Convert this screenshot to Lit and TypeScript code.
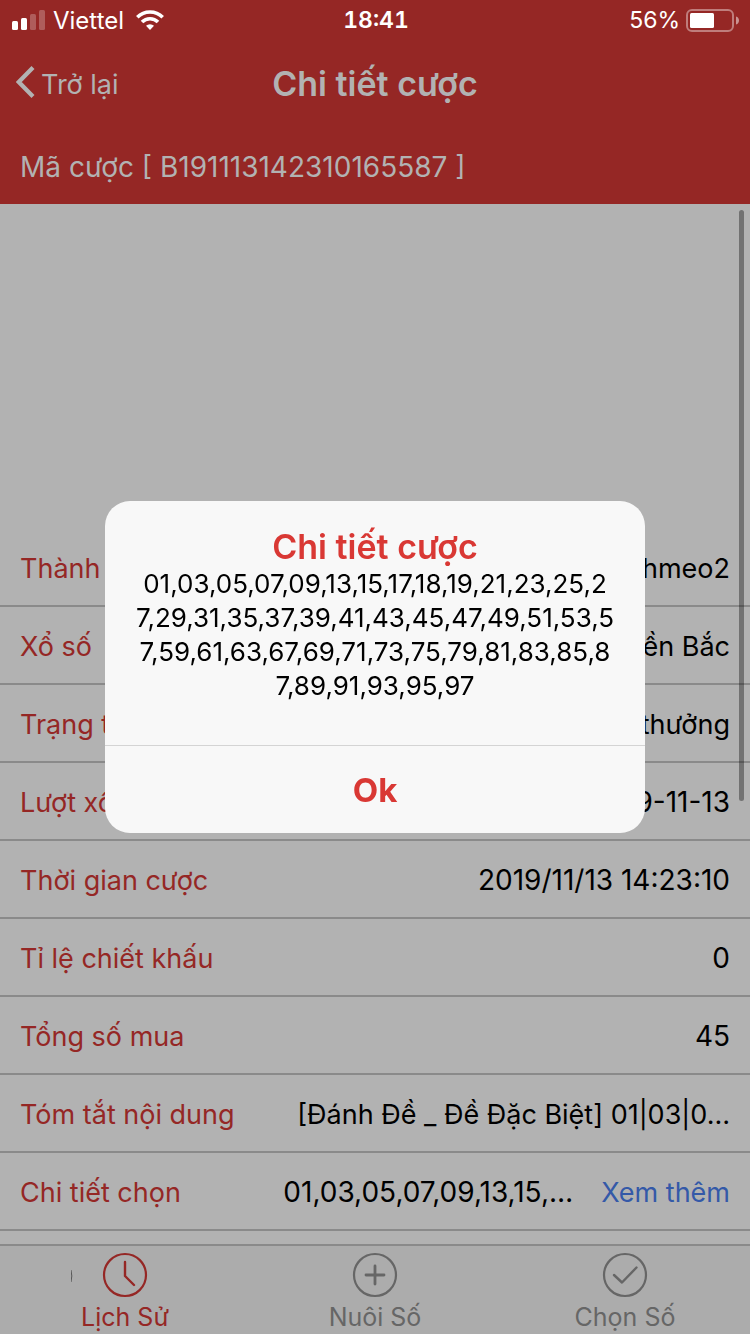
import { LitElement, html, css, svg } from "lit";
import { customElement, state } from "lit/decorators.js";

interface Row {
  label: string;
  value: string;
  numeric?: boolean;
  more?: boolean;
}

const ROWS: Row[] = [
  { label: "Thành viên", value: "thanhmeo2" },
  { label: "Xổ số", value: "Miền Bắc" },
  { label: "Trạng thái", value: "Trúng thưởng" },
  { label: "Lượt xổ", value: "2019-11-13", numeric: true },
  { label: "Thời gian cược", value: "2019/11/13 14:23:10", numeric: true },
  { label: "Tỉ lệ chiết khấu", value: "0", numeric: true },
  { label: "Tổng số mua", value: "45", numeric: true },
  { label: "Tóm tắt nội dung", value: "[Đánh Đề _ Đề Đặc Biệt] 01|03|0…" },
  { label: "Chi tiết chọn", value: "01,03,05,07,09,13,15,…", numeric: true, more: true },
];

const NUMBERS = [
  "01,03,05,07,09,13,15,17,18,19,21,23,25,2",
  "7,29,31,35,37,39,41,43,45,47,49,51,53,5",
  "7,59,61,63,67,69,71,73,75,79,81,83,85,8",
  "7,89,91,93,95,97",
].join("\n");

const TABS = [
  { label: "Lịch Sử", icon: svg`<path d="M23 10v14l9 9" stroke-width="2.4" />` },
  { label: "Nuôi Số", icon: svg`<path d="M23 14v18M14 23h18" stroke-width="2.8" />` },
  { label: "Chọn Số", icon: svg`<path d="M12 23l8 7.500L34.500 15.500" stroke-width="2.400" />` },
];

@customElement("app-root")
export class AppRoot extends LitElement {
  @state() private open = true;
  @state() private active = 0;

  static styles = css`
    :host {
      display: block;
      font-family: Inter, "Liberation Sans", sans-serif;
      color: #000;
    }
    * {
      box-sizing: border-box;
    }
    button {
      font: inherit;
      color: inherit;
      background: none;
      border: 0;
      padding: 0;
      margin: 0;
    }
    .page {
      min-height: 100vh;
      display: flex;
      flex-direction: column;
      background: #b2b2b2;
    }
    .header {
      background: #952725;
      color: #b2b2b2;
    }
    .status {
      display: grid;
      grid-template-columns: 1fr auto 1fr;
      align-items: center;
      height: 40px;
      padding: 0 10px 0 12px;
      color: #fff;
      font-size: 23px;
    }
    .carrier,
    .power {
      display: flex;
      align-items: center;
    }
    .carrier {
      gap: 8px;
      font-size: 24px;
    }
    .wifi {
      margin-left: 4px;
    }
    .power {
      justify-content: flex-end;
      gap: 6px;
    }
    .clock {
      font-weight: 600;
      font-variant-numeric: tabular-nums;
    }
    .nav {
      display: grid;
      grid-template-columns: 1fr auto 1fr;
      align-items: center;
      height: 88px;
      padding: 0 16px;
    }
    .back {
      display: flex;
      align-items: center;
      justify-self: start;
      gap: 6px;
      font-size: 27px;
    }
    .chevron {
      margin-bottom: 4px;
    }
    .title {
      margin: 0;
      font-size: 34px;
      line-height: 40px;
      font-weight: 600;
    }
    .code {
      margin: 0;
      padding: 2px 20px 0;
      font-size: 28px;
      line-height: 74px;
    }
    .content {
      flex: 1;
      position: relative;
      display: flex;
      flex-direction: column;
      justify-content: flex-end;
      padding-bottom: 13px;
    }
    .scroll {
      position: absolute;
      top: 6px;
      right: 6px;
      bottom: 443px;
      width: 5px;
      border-radius: 3px;
      background: rgba(0, 0, 0, 0.36);
    }
    .rows {
      margin: 0;
      font-size: 27px;
    }
    .row {
      display: flex;
      align-items: center;
      justify-content: space-between;
      height: 78px;
      padding: 2px 20px 0;
      border-bottom: 2px solid #8a8a8a;
      white-space: nowrap;
    }
    .label {
      color: #952725;
    }
    .value {
      display: flex;
      align-items: baseline;
      gap: 28px;
      margin: 0;
    }
    .numeric {
      font-size: 28px;
    }
    .more {
      color: #3459a8;
      text-decoration: none;
    }
    .tabs {
      display: grid;
      grid-template-columns: repeat(3, 1fr);
      height: 90px;
      border-top: 2px solid #8a8a8a;
      background: #acacac;
    }
    .tab {
      display: flex;
      flex-direction: column;
      align-items: center;
      padding-top: 6px;
      gap: 2px;
      font-size: 25px;
      line-height: 34px;
      color: #666;
    }
    .tab.active {
      color: #952725;
    }
    .mark {
      position: absolute;
      left: 71px;
      bottom: 52px;
    }
    svg {
      display: block;
      flex: none;
    }
    .backdrop {
      position: fixed;
      inset: 0;
      display: flex;
      align-items: center;
      justify-content: center;
    }
    .dialog {
      width: 72%;
      border-radius: 25px;
      background: #f8f8f8;
      overflow: hidden;
    }
    .body {
      padding: 26px 24px 42px;
      text-align: center;
    }
    .heading {
      margin: 0;
      color: #d93834;
      font-size: 34px;
      line-height: 40px;
      font-weight: 600;
    }
    .numbers {
      margin: 0;
      font-size: 26px;
      line-height: 34px;
      white-space: pre-line;
      word-break: break-all;
    }
    .ok {
      display: block;
      width: 100%;
      height: 88px;
      border-top: 1px solid #d4d4d4;
      color: #d93834;
      font-size: 33px;
      font-weight: 700;
    }
  `;

  render() {
    return html`
      <div class="page">
        <header class="header">
          <div class="status">
            <div class="carrier">
              <svg width="33" height="20" viewBox="0 0 33 20" fill="#fff">
                <rect x="0" y="11" width="6" height="9" rx="1.500" />
                <rect x="9" y="8" width="6" height="12" rx="1.500" />
                <rect x="18" y="4" width="6" height="16" rx="1.500" opacity=".25" />
                <rect x="27" y="0" width="6" height="20" rx="1.500" opacity=".25" />
              </svg>
              <span>Viettel</span>
              <svg class="wifi" width="28" height="20" viewBox="0 0 28 20" fill="none" stroke="#fff" stroke-width="3.600">
                <path d="M1.300 7.200a18 18 0 0 1 25.400 0" />
                <path d="M6 12a11.300 11.300 0 0 1 16 0" />
                <path d="M14 20l-4-4.200a5.800 5.800 0 0 1 8 0z" fill="#fff" stroke="none" />
              </svg>
            </div>
            <span class="clock">18:41</span>
            <div class="power">
              <span>56%</span>
              <svg width="54" height="23" viewBox="0 0 54 23">
                <rect x="1" y="1" width="46" height="21" rx="5" fill="none" stroke="#fff" stroke-width="2" opacity=".4" />
                <rect x="4" y="4" width="24" height="15" rx="1.500" fill="#fff" />
                <path d="M50 7.500c4 1 4 7 0 8z" fill="#fff" opacity=".5" />
              </svg>
            </div>
          </div>
          <nav class="nav">
            <button class="back">
              <svg class="chevron" width="19" height="32" viewBox="0 0 19 32" fill="none" stroke="#b2b2b2" stroke-width="4.200">
                <path d="M17 1.500L2.800 16L17 30.500" />
              </svg>
              <span>Trở lại</span>
            </button>
            <h1 class="title">Chi tiết cược</h1>
          </nav>
          <p class="code">Mã cược [ B191113142310165587 ]</p>
        </header>
        <main class="content">
          <dl class="rows">
            ${ROWS.map(
              (r) => html`<div class="row">
                <dt class="label">${r.label}</dt>
                <dd class="value">
                  <span class=${r.numeric ? "numeric" : ""}>${r.value}</span>
                  ${r.more
                    ? html`<a class="more" href="#" @click=${this.show}>Xem thêm</a>`
                    : ""}
                </dd>
              </div>`
            )}
          </dl>
          <div class="scroll"></div>
        </main>
        <nav class="tabs">
          ${TABS.map(
            (t, i) => html`<button
              class="tab ${i === this.active ? "active" : ""}"
              @click=${() => (this.active = i)}
            >
              <svg width="46" height="46" viewBox="0 0 46 46" fill="none" stroke="currentColor" stroke-linecap="round" stroke-linejoin="round">
                <circle cx="23" cy="23" r="21" stroke-width="2.200" />
                ${t.icon}
              </svg>
              <span>${t.label}</span>
            </button>`
          )}
        </nav>
        <svg class="mark" width="2" height="12" viewBox="0 0 2 12" fill="none" stroke="#555">
          <path d="M0 0q1.600 6 0 12" />
        </svg>
      </div>
      ${this.open
        ? html`<div class="backdrop">
            <section class="dialog" role="dialog" aria-labelledby="dialog-title">
              <div class="body">
                <h2 class="heading" id="dialog-title">Chi tiết cược</h2>
                <p class="numbers">${NUMBERS}</p>
              </div>
              <button class="ok" @click=${() => (this.open = false)}>Ok</button>
            </section>
          </div>`
        : ""}
    `;
  }

  private show(e: Event) {
    e.preventDefault();
    this.open = true;
  }
}
